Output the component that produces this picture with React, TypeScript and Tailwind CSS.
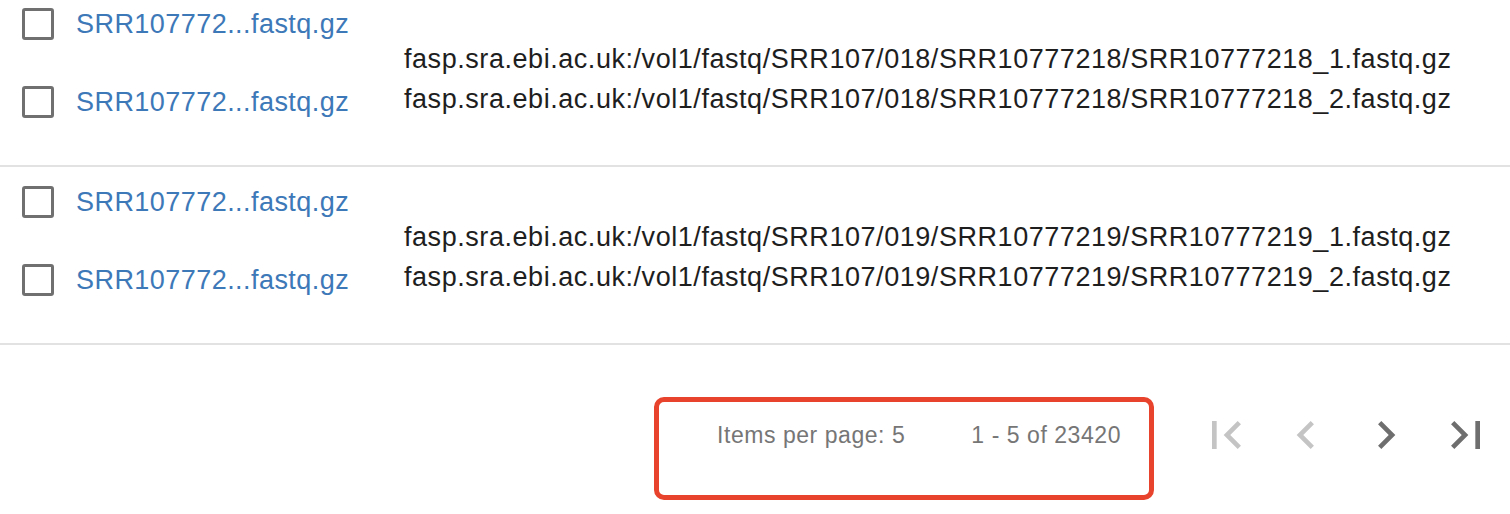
import React from 'react';
import { MdFirstPage, MdChevronLeft, MdChevronRight, MdLastPage } from 'react-icons/md';

interface FileRow {
  id: string;
  run: string;
}

const rows: FileRow[] = [
  { id: 'SRR10777218', run: '018' },
  { id: 'SRR10777219', run: '019' },
];

const FileItem = () => (
  <div className="flex h-[32px] items-center">
    <span className="block h-[32px] w-[32px] shrink-0 rounded-[3px] border-[3px] border-[#707070] bg-white" />
    <a className="ml-[22px] cursor-pointer text-[27px] leading-none tracking-[0.45px] text-[#3d78b8]">SRR107772...fastq.gz</a>
  </div>
);

const Row = ({ row }: { row: FileRow }) => (
  <div className="flex h-[178px] border-b-2 border-[#e2e2e2]">
    {/* checkboxes + short names */}
    <div className="flex w-[404px] shrink-0 flex-col gap-[46px] pl-[22px] pt-[19px]">
      <FileItem />
      <FileItem />
    </div>
    {/* full aspera paths */}
    <div className="flex flex-col pt-[50px] text-[27px] leading-[40px] tracking-[0.55px] text-[#1e1e1e]">
      <span>fasp.sra.ebi.ac.uk:/vol1/fastq/SRR107/{row.run}/{row.id}/{row.id}_1.fastq.gz</span>
      <span>fasp.sra.ebi.ac.uk:/vol1/fastq/SRR107/{row.run}/{row.id}/{row.id}_2.fastq.gz</span>
    </div>
  </div>
);

const App = () => {
  return (
    <div className="h-[514px] w-full overflow-hidden bg-white" style={{ fontFamily: '"Liberation Sans", Arial, sans-serif' }}>
      <div className="-mt-[11px]">
        {rows.map((r) => (
          <Row key={r.id} row={r} />
        ))}
      </div>

      {/* paginator */}
      <div className="relative flex h-[180px] items-center justify-end pr-[4px] text-[23px] tracking-[0.55px] text-[#767676]">
        <span className="mr-[66px]">Items per page: 5</span>
        <span className="mr-[65px]">1 - 5 of 23420</span>
        <div className="flex">
          <button className="flex h-[80px] w-[80px] items-center justify-center text-[#c4c4c4]" disabled>
            <MdFirstPage size={56} />
          </button>
          <button className="flex h-[80px] w-[80px] items-center justify-center text-[#c4c4c4]" disabled>
            <MdChevronLeft size={56} />
          </button>
          <button className="flex h-[80px] w-[80px] items-center justify-center text-[#6e6e6e]">
            <MdChevronRight size={56} />
          </button>
          <button className="flex h-[80px] w-[80px] items-center justify-center text-[#6e6e6e]">
            <MdLastPage size={56} />
          </button>
        </div>

        {/* highlight annotation */}
        <div className="pointer-events-none absolute left-[654px] top-[52px] h-[103px] w-[500px] rounded-[10px] border-[5px] border-[#e8432c]" />
      </div>
    </div>
  );
};

export default App;
